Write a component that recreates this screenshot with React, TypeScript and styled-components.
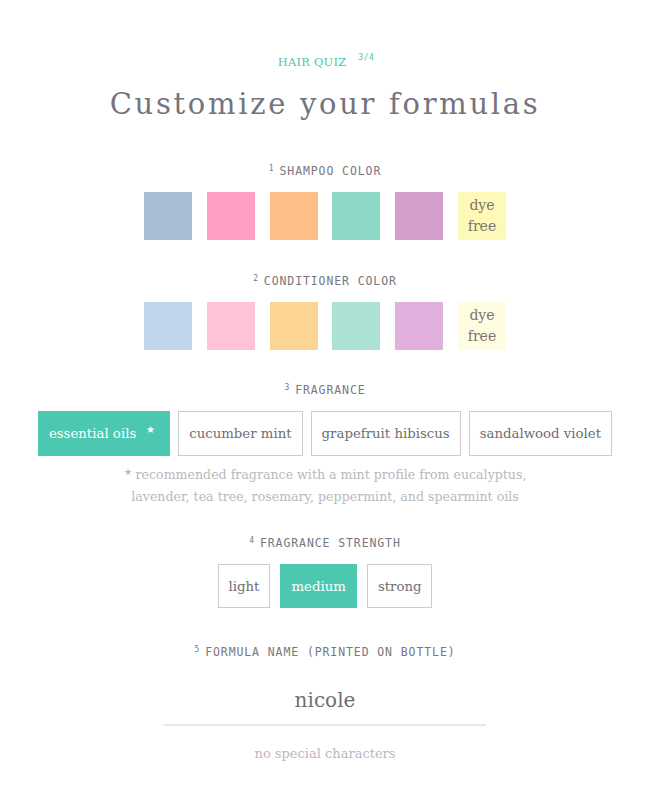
import React, { FC, useState } from 'react';
import styled, { createGlobalStyle } from 'styled-components';

const GlobalStyle = createGlobalStyle`
  body {
    margin: 0;
    background: #ffffff;
    font-family: "DejaVu Serif", "Liberation Serif", serif;
  }
`;

const Page = styled.div`
  width: 650px;
  display: flex;
  flex-direction: column;
  align-items: center;
  padding-top: 52px;
`;

const Kicker = styled.div`
  display: flex;
  align-items: flex-start;
  gap: 12px;
  height: 20px;
  padding-left: 2px;
`;

const KickerText = styled.span`
  font-family: "DejaVu Serif", serif;
  font-size: 11.5px;
  line-height: 20px;
  color: #4cc6ad;
  letter-spacing: 0.2px;
`;

const Step = styled.span`
  font-family: "DejaVu Sans Mono", monospace;
  font-size: 8px;
  line-height: 12px;
  color: #4cc6ad;
  letter-spacing: 0.5px;
`;

const Title = styled.h1`
  margin: 10px 0 0;
  font-family: "DejaVu Serif", serif;
  font-weight: normal;
  font-size: 29px;
  line-height: 44px;
  letter-spacing: 2.7px;
  color: #74747e;
`;

const Label = styled.div<{ top: number }>`
  margin-top: ${({ top }) => top}px;
  padding-top: 1px;
  height: 14px;
  font-family: "DejaVu Sans Mono", monospace;
  font-size: 11.5px;
  line-height: 14px;
  letter-spacing: 0.9px;
  color: #77777d;
  text-transform: uppercase;
`;

const Num = styled.span`
  font-size: 8px;
  line-height: 0;
  position: relative;
  top: -4px;
  margin-right: 5px;
`;

const Swatches = styled.div`
  display: flex;
  gap: 14.8px;
  margin-top: 14px;
`;

const Swatch = styled.div<{ color: string }>`
  width: 48px;
  height: 48px;
  background: ${({ color }) => color};
  display: flex;
  align-items: center;
  justify-content: center;
  text-align: center;
  font-size: 14px;
  line-height: 21px;
  color: #7a7570;
  cursor: pointer;
`;

const Options = styled.div<{ gap: number }>`
  display: flex;
  gap: ${({ gap }) => gap}px;
  margin-top: 14px;
`;

const Option = styled.button<{ selected?: boolean; tall?: boolean }>`
  height: ${({ tall }) => (tall ? 45 : 44)}px;
  padding: 0 10px;
  border: 1px solid ${({ selected }) => (selected ? '#4cc8b1' : '#cdcdcd')};
  background: ${({ selected }) => (selected ? '#4cc8b1' : '#ffffff')};
  color: ${({ selected }) => (selected ? '#ffffff' : '#6e6e74')};
  font-family: "DejaVu Serif", serif;
  font-size: 13.3px;
  display: flex;
  align-items: center;
  cursor: pointer;
`;

const Star = styled.span`
  font-size: 10px;
  margin-left: 10px;
  margin-right: 4px;
  position: relative;
  top: -4px;
`;

const Note = styled.p`
  margin: 8px 0 0;
  text-align: center;
  font-size: 12.6px;
  line-height: 22px;
  color: #b9b9bc;
`;

const NoteStar = styled.span`
  font-size: 9px;
  line-height: 0;
  position: relative;
  top: -4px;
  margin-right: 4px;
`;

const NameField = styled.div`
  margin-top: 26px;
  width: 322px;
  border-bottom: 2px solid #e8e8e8;
  text-align: center;
  font-size: 20px;
  line-height: 30px;
  padding-bottom: 9px;
  color: #6e6e74;
`;

const Hint = styled.div`
  margin-top: 17px;
  font-size: 13px;
  line-height: 22px;
  color: #b9b9bc;
`;

const shampoo = ['#a6bdd2', '#fea0c5', '#fdbe87', '#8ed8c8', '#d59dca'];
const conditioner = ['#c1d5ec', '#fec3d8', '#fdd593', '#ace2d6', '#e1b0dc'];
const fragrances = ['essential oils', 'cucumber mint', 'grapefruit hibiscus', 'sandalwood violet'];
const strengths = ['light', 'medium', 'strong'];

const App: FC = () => {
  const [fragrance, setFragrance] = useState('essential oils');
  const [strength, setStrength] = useState('medium');

  return (
    <Page>
      <GlobalStyle />
      <Kicker>
        <KickerText>HAIR QUIZ</KickerText>
        <Step>3/4</Step>
      </Kicker>
      <Title>Customize your formulas</Title>

      <Label top={37}>
        <Num>1</Num>Shampoo color
      </Label>
      <Swatches>
        {shampoo.map((c) => (
          <Swatch key={c} color={c} />
        ))}
        <Swatch color="#fef8b9">
          dye
          <br />
          free
        </Swatch>
      </Swatches>

      <Label top={33}>
        <Num>2</Num>Conditioner color
      </Label>
      <Swatches>
        {conditioner.map((c) => (
          <Swatch key={c} color={c} />
        ))}
        <Swatch color="#fefde2">
          dye
          <br />
          free
        </Swatch>
      </Swatches>

      <Label top={32}>
        <Num>3</Num>Fragrance
      </Label>
      <Options gap={8}>
        {fragrances.map((f) => (
          <Option key={f} tall selected={f === fragrance} onClick={() => setFragrance(f)}>
            {f}
            {f === 'essential oils' && <Star>★</Star>}
          </Option>
        ))}
      </Options>
      <Note>
        <NoteStar>★</NoteStar>recommended fragrance with a mint profile from eucalyptus,
        <br />
        lavender, tea tree, rosemary, peppermint, and spearmint oils
      </Note>

      <Label top={27}>
        <Num>4</Num>Fragrance strength
      </Label>
      <Options gap={10}>
        {strengths.map((s) => (
          <Option key={s} selected={s === strength} onClick={() => setStrength(s)}>
            {s}
          </Option>
        ))}
      </Options>

      <Label top={36}>
        <Num>5</Num>Formula name (printed on bottle)
      </Label>
      <NameField>nicole</NameField>
      <Hint>no special characters</Hint>
    </Page>
  );
};

export default App;
